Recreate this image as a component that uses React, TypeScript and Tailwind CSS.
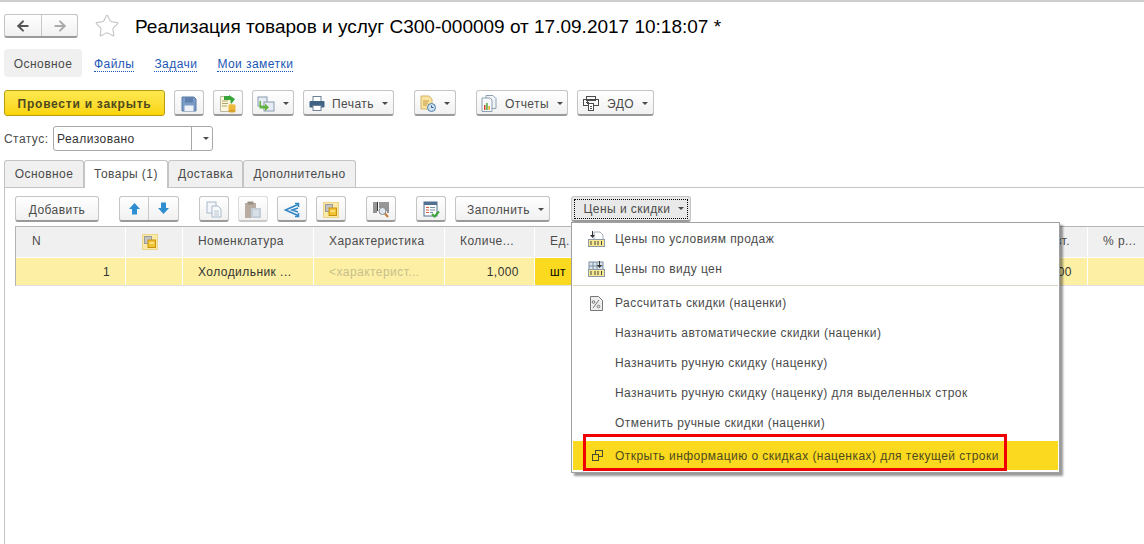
import React from "react"
import { ArrowLeft, ArrowRight, Star } from "lucide-react"

function Caret() {
  return <span className="ml-2 inline-block w-0 h-0 border-x-[3px] border-x-transparent border-t-[3px] border-t-[#4a4a4a]" />
}

function Btn({ w, children, className = "" }: { w: string; children?: React.ReactNode; className?: string }) {
  return (
    <div
      className={`h-[26px] ${w} pt-[2px] flex items-center justify-center shrink-0 rounded-[3px] border border-[#c4c4c4] border-b-[#9a9a9a] border-b-2 bg-linear-to-b from-white to-[#f1f1f1] text-[#4b4b4b] ${className}`}
    >
      {children}
    </div>
  )
}

// --- иконки ---
function SaveIcon() {
  return (
    <svg width="16" height="16" viewBox="0 0 16 16">
      <path d="M1 1h12l2 2v12H1z" fill="#7c9cc6" stroke="#5a7aa6" />
      <rect x="4" y="1.500" width="8" height="5" fill="#5f80ad" />
      <rect x="3.500" y="9.500" width="9" height="5.500" fill="#eef1f5" />
    </svg>
  )
}
function PostIcon() {
  return (
    <svg width="18" height="18" viewBox="0 0 18 18">
      <path d="M1.500 1.500h8l3 3v12h-11z" fill="#fbf6dc" stroke="#b9b9a0" />
      <path d="M3 6h6M3 8.500h6M3 11h5" stroke="#b2a36a" />
      <path d="M5 1h5V0l6 4-3 4h-1.500V5H5z" fill="#37a537" />
      <ellipse cx="13" cy="10.500" rx="3.500" ry="1.500" fill="#f0c24a" />
      <rect x="9.500" y="10.500" width="7" height="5.500" fill="#ecb93c" />
      <ellipse cx="13" cy="16" rx="3.500" ry="1.500" fill="#d9a22d" />
    </svg>
  )
}
function LinkedIcon() {
  return (
    <svg width="18" height="16" viewBox="0 0 18 16">
      <rect x="1" y="1" width="9" height="9" fill="#e6ecf3" stroke="#8a9bb0" />
      <rect x="7" y="6" width="10" height="9" fill="#e6ecf3" stroke="#8a9bb0" />
      <path d="M4 5v5h4V7.500l4 4-4 3.500v-2.500H2.500V5z" fill="#5fb53a" />
    </svg>
  )
}
function PrintIcon() {
  return (
    <svg width="16" height="15" viewBox="0 0 16 15">
      <rect x="4" y="0.500" width="8" height="5" fill="#fff" stroke="#6f8297" />
      <rect x="0.500" y="5" width="15" height="6.500" rx="1" fill="#3f6285" />
      <rect x="4" y="9.500" width="8" height="5" fill="#fff" stroke="#6f8297" />
    </svg>
  )
}
function DocClockIcon() {
  return (
    <svg width="16" height="17" viewBox="0 0 16 17">
      <path d="M1 1h8l3 3v10H1z" fill="#f9e3a0" stroke="#d3b468" />
      <path d="M3 6h6M3 8h5M3 10h4" stroke="#c69a45" />
      <circle cx="11.500" cy="12.500" r="4" fill="#cfe2f3" stroke="#4e7ea8" />
      <path d="M11.500 10.500v2h2" stroke="#2f5d86" fill="none" />
    </svg>
  )
}
function ReportIcon() {
  return (
    <svg width="16" height="17" viewBox="0 0 16 17">
      <path d="M5 .5h7l3 3v10H5z" fill="#f2f5f8" stroke="#8c9fb3" />
      <path d="M1 3h8l2 2v11.500H1z" fill="#f7f9fb" stroke="#8c9fb3" />
      <rect x="3" y="10" width="1.500" height="5" fill="#d8452f" />
      <rect x="5.200" y="8" width="1.500" height="7" fill="#4fa53a" />
      <rect x="7.400" y="11" width="1.500" height="4" fill="#e8a92b" />
    </svg>
  )
}
function EdoIcon() {
  return (
    <svg width="16" height="15" viewBox="0 0 16 15" fill="none" stroke="#4a4a4a">
      <rect x="3.500" y=".5" width="9" height="4" />
      <rect x=".5" y="3.500" width="15" height="6" />
      <rect x="5.500" y="7.500" width="5" height="7" fill="#fff" />
      <path d="M3 6.500h3M4.500 5v3M7 10.500h2M7 12.500h2" />
    </svg>
  )
}
function CopyIcon() {
  return (
    <svg width="16" height="17" viewBox="0 0 16 17">
      <rect x="1" y="1" width="9" height="11" fill="#f3f6fa" stroke="#a9bacb" />
      <path d="M6 5h6l3 3v8H6z" fill="#f7f9fb" stroke="#a9bacb" />
      <path d="M8 10h5M8 12h5M8 14h5" stroke="#b9c6d3" />
    </svg>
  )
}
function PasteIcon() {
  return (
    <svg width="18" height="18" viewBox="0 0 18 18">
      <rect x="1" y="2" width="11" height="15" fill="#b8aca2" />
      <rect x="3.500" y="0.500" width="6" height="3" fill="#9a8d82" />
      <rect x="7" y="7" width="10" height="10" fill="#c3ced9" />
      <path d="M9 10h6M9 12h6M9 14h6" stroke="#eef2f6" />
    </svg>
  )
}
function BranchIcon() {
  return (
    <svg width="16" height="16" viewBox="0 0 16 16" fill="none" stroke="#2f87c7" strokeWidth="1.500">
      <path d="M14 2.500L1.500 8 14 13.500M14 6L8 8l6 2" />
      <path d="M11 1.500h3.500v3.500M11 14.500h3.500V11" />
    </svg>
  )
}
function LockIcon() {
  return (
    <span className="w-4 h-4 flex items-center justify-center bg-[#fbe9a6] border border-[#ecd58b]">
      <svg width="12" height="12" viewBox="0 0 12 12">
        <rect x="0.500" y="0.500" width="7" height="7" fill="#c4c4c4" stroke="#9a9a9a" />
        <rect x="4" y="4" width="7.500" height="7.500" fill="#f4c430" stroke="#c69214" />
        <rect x="5.500" y="6.500" width="4.500" height="1.200" fill="#fff3c0" />
      </svg>
    </span>
  )
}
function BarcodeIcon() {
  return (
    <svg width="16" height="17" viewBox="0 0 16 17">
      <path d="M1 1v11M3 1v11M4.500 1v9M7 1v6M9 1v6M11 1v6M13 1v9M15 1v11" stroke="#333" />
      <circle cx="9.500" cy="10" r="3.500" fill="#dfe7ee" stroke="#8a8a8a" />
      <path d="M12 12.500l3 3.500" stroke="#c27a3a" strokeWidth="2" />
    </svg>
  )
}
function ListCheckIcon() {
  return (
    <svg width="17" height="17" viewBox="0 0 17 17">
      <rect x="1" y="1" width="13" height="14" fill="#fff" stroke="#52708f" />
      <rect x="1" y="1" width="13" height="3" fill="#52708f" />
      <path d="M3 6.500h3M3 9h3M3 11.500h3" stroke="#d85a3a" />
      <path d="M7 6.500h5M7 9h5M7 11.500h3" stroke="#7b8ea1" />
      <path d="M9 13l2.500 2.500L16 10.500" fill="none" stroke="#3da53a" strokeWidth="2" />
    </svg>
  )
}
function PriceIcon({ grid }: { grid?: boolean }) {
  return (
    <svg width="17" height="16" viewBox="0 0 17 16">
      {grid ? (
        <g>
          <rect x="1" y="1" width="14" height="8" fill="#dbe4ec" stroke="#7d90a3" />
          <path d="M5 1v8M9 1v8M1 5h14" stroke="#7d90a3" />
        </g>
      ) : (
        <path d="M6 1h6l3 3v5H6z" fill="#fff" stroke="#a3afba" />
      )}
      <path d="M4 0v4H2l2.500 3L7 4H5V0z" fill="#333" transform={grid ? "translate(7 0)" : ""} />
      <rect x="0.500" y="8.500" width="16" height="7" fill="#f7e88f" stroke="#8d9aa6" />
      <path d="M3 10v4M7 10v4M10 10v4M13.500 10v4" stroke="#444" />
    </svg>
  )
}
function PercentIcon() {
  return (
    <svg width="13" height="15" viewBox="0 0 13 15">
      <path d="M.5.500h8l4 4v10H.5z" fill="#eee" stroke="#777" />
      <path d="M3 12l6-8" stroke="#777" />
      <circle cx="3.500" cy="6" r="1.300" fill="none" stroke="#777" />
      <circle cx="8.500" cy="10.500" r="1.300" fill="none" stroke="#777" />
    </svg>
  )
}
function OpenIcon() {
  return (
    <svg width="11" height="11" viewBox="0 0 11 11" fill="none" stroke="#4a4a30">
      <rect x="3.500" y=".5" width="7" height="6" />
      <rect x=".5" y="4.500" width="6" height="6" fill="#fbd91e" />
    </svg>
  )
}

function HeadCell({ w, children, center }: { w: string; children?: React.ReactNode; center?: boolean }) {
  return (
    <div className={`${w} shrink-0 h-full bg-[#f0f0f0] flex items-center mr-px text-[#4b4b4b] ${center ? "justify-center pr-[8px]" : "pl-[15px]"}`}>
      {children}
    </div>
  )
}

function MenuItem({ icon, children }: { icon?: React.ReactNode; children: React.ReactNode }) {
  return (
    <div className="h-[30px] flex items-center shrink-0 text-[#4b4b4b]">
      <span className="w-[43px] flex justify-center pl-[6px] shrink-0">{icon}</span>
      {children}
    </div>
  )
}

export default function App() {
  return (
    <div className="relative w-[1144px] h-[544px] overflow-hidden bg-white text-[12px] tracking-[0.45px] font-['Liberation_Sans',Arial,sans-serif]">
      <div className="h-[2px] bg-[#cfcfcf]" />

      {/* Заголовок */}
      <div className="flex items-center h-[24px] mt-[12px] ml-[4px]">
        <div className="flex w-[74px] h-[24px] rounded-[3px] border border-[#c4c4c4] border-b-[#9a9a9a] border-b-2 bg-linear-to-b from-white to-[#f1f1f1]">
          <div className="w-[37px] flex items-center justify-center border-r border-[#c8c8c8]">
            <ArrowLeft size={16} strokeWidth={3} className="text-[#555]" />
          </div>
          <div className="flex-1 flex items-center justify-center">
            <ArrowRight size={16} strokeWidth={3} className="text-[#aaa]" />
          </div>
        </div>
        <Star size={26} strokeWidth={1} className="ml-[16px] text-[#c4c4c4]" />
        <h1 className="ml-[15px] pt-[2px] text-[19px] tracking-normal text-black whitespace-nowrap">Реализация товаров и услуг С300-000009 от 17.09.2017 10:18:07 *</h1>
      </div>

      {/* Ссылки на разделы */}
      <div className="flex items-center h-[28px] mt-[11px] ml-[4px] text-[#1c57b5]">
        <div className="w-[78px] h-full pt-[2px] flex items-center justify-center rounded-[4px] bg-[#f0f0f0] text-[#4b4b4b]">Основное</div>
        <span className="ml-[12px] mt-[2px] border-b border-dotted border-[#1c57b5] leading-[14px]">Файлы</span>
        <span className="ml-[20px] mt-[2px] border-b border-dotted border-[#1c57b5] leading-[14px]">Задачи</span>
        <span className="ml-[20px] mt-[2px] border-b border-dotted border-[#1c57b5] leading-[14px]">Мои заметки</span>
      </div>

      {/* Командная панель */}
      <div className="flex items-center h-[26px] mt-[13px] ml-[4px]">
        <div className="w-[161px] h-[26px] pt-[2px] flex items-center justify-center rounded-[3px] border border-[#b89c10] bg-linear-to-b from-[#fde94e] to-[#fbd400] font-bold text-[#4f4a1e] tracking-[0.75px]">
          Провести и закрыть
        </div>
        <Btn w="w-[30px]" className="ml-[9px]"><SaveIcon /></Btn>
        <Btn w="w-[30px]" className="ml-[9px]"><PostIcon /></Btn>
        <Btn w="w-[42px]" className="ml-[9px]"><LinkedIcon /><Caret /></Btn>
        <Btn w="w-[91px]" className="ml-[9px]"><PrintIcon /><span className="ml-[7px]">Печать</span><Caret /></Btn>
        <Btn w="w-[42px]" className="ml-[20px]"><DocClockIcon /><Caret /></Btn>
        <Btn w="w-[92px]" className="ml-[20px]"><ReportIcon /><span className="ml-[8px]">Отчеты</span><Caret /></Btn>
        <Btn w="w-[77px]" className="ml-[9px]"><EdoIcon /><span className="ml-[8px]">ЭДО</span><Caret /></Btn>
      </div>

      {/* Статус */}
      <div className="flex items-center h-[25px] mt-[10px] ml-[4px] text-[#4b4b4b]">
        <span className="w-[49px]">Статус:</span>
        <div className="flex w-[160px] h-[25px] rounded-[3px] border border-[#a8a8a8]">
          <span className="flex-1 flex items-center pl-[3px] text-[#333]">Реализовано</span>
          <span className="w-[21px] flex items-center justify-center border-l border-[#a8a8a8]"><Caret /></span>
        </div>
      </div>

      {/* Закладки */}
      <div className="flex items-end h-[28px] mt-[8px] ml-[4px] text-[#4b4b4b]">
        <div className="w-[80px] h-[27px] pb-px flex items-center justify-center bg-[#f0f0f0] border border-[#c4c4c4] border-b-0 rounded-t-[3px]">Основное</div>
        <div className="w-[84px] h-[28px] pb-[2px] -mb-px z-10 flex items-center justify-center bg-white border border-[#c4c4c4] border-b-0 rounded-t-[3px]">Товары (1)</div>
        <div className="w-[75px] h-[27px] pb-px flex items-center justify-center bg-[#f0f0f0] border border-[#c4c4c4] border-b-0 rounded-t-[3px]">Доставка</div>
        <div className="w-[113px] h-[27px] pb-px flex items-center justify-center bg-[#f0f0f0] border border-[#c4c4c4] border-b-0 rounded-t-[3px]">Дополнительно</div>
      </div>

      {/* Содержимое закладки */}
      <div className="ml-[4px] h-[357px] border-l border-t border-[#c4c4c4] pl-[10px] pt-[8px]">
        <div className="flex items-center h-[26px]">
          <Btn w="w-[84px]">Добавить</Btn>
          <div className="ml-[20px] flex w-[60px] h-[26px] rounded-[3px] border border-[#c4c4c4] border-b-[#9a9a9a] border-b-2 bg-linear-to-b from-white to-[#f1f1f1]">
            <div className="w-[29px] flex items-center justify-center border-r border-[#c8c8c8]">
              <svg width="13" height="13" viewBox="0 0 13 13"><path d="M6.500 1L12 7H9v5.500H4V7H1z" fill="#2f8ed0" /></svg>
            </div>
            <div className="flex-1 flex items-center justify-center">
              <svg width="13" height="13" viewBox="0 0 13 13"><path d="M6.500 12L12 6H9V.5H4V6H1z" fill="#2f8ed0" /></svg>
            </div>
          </div>
          <Btn w="w-[30px]" className="ml-[20px]"><CopyIcon /></Btn>
          <Btn w="w-[30px]" className="ml-[9px] border-[#dcdcdc] border-b-[#c8c8c8]"><PasteIcon /></Btn>
          <Btn w="w-[30px]" className="ml-[9px]"><BranchIcon /></Btn>
          <Btn w="w-[30px]" className="ml-[9px]"><LockIcon /></Btn>
          <Btn w="w-[30px]" className="ml-[20px]"><BarcodeIcon /></Btn>
          <Btn w="w-[30px]" className="ml-[20px]"><ListCheckIcon /></Btn>
          <Btn w="w-[95px]" className="ml-[9px] pl-[6px]">Заполнить<Caret /></Btn>
          <Btn w="w-[120px]" className="ml-[21px] !pt-0 border-[#8f8f8f] bg-none bg-[#e9e9e9]">
            <span className="flex items-center justify-center w-[114px] h-[20px] pl-[6px] border border-dotted border-black">Цены и скидки<Caret /></span>
          </Btn>
        </div>

        {/* Таблица */}
        <div className="mt-[4px] border-l border-t border-[#b4b4b4]">
          <div className="flex h-[30px] mb-px">
            <HeadCell w="w-[109px]"><span className="pl-[1px] pb-[2px]">N</span></HeadCell>
            <HeadCell w="w-[56px]" center><LockIcon /></HeadCell>
            <HeadCell w="w-[130px]"><span className="pb-[2px]">Номенклатура</span></HeadCell>
            <HeadCell w="w-[130px]"><span className="pb-[2px]">Характеристика</span></HeadCell>
            <HeadCell w="w-[89px]"><span className="pb-[2px]">Количе...</span></HeadCell>
            <div className="w-[552px] mr-px shrink-0 h-full bg-[#f0f0f0] flex items-center justify-between pl-[15px] pr-[17px] text-[#4b4b4b]">
              <span className="pb-[2px]">Ед.</span>
              <span className="pb-[2px]">вт.</span>
            </div>
            <HeadCell w="w-[56px]"><span className="pb-[2px]">% р...</span></HeadCell>
          </div>
          <div className="flex h-[27px] box-content border-b border-[#e0e0e0]">
            <div className="w-[109px] mr-px pt-px bg-[#fdf0a5] flex items-center justify-end pr-[15px] text-[#333]">1</div>
            <div className="w-[56px] mr-px bg-[#fdf0a5]" />
            <div className="w-[130px] mr-px pt-px bg-[#fdf0a5] flex items-center pl-[15px] text-[#333]">Холодильник ...</div>
            <div className="w-[130px] mr-px pt-px bg-[#fdf0a5] flex items-center pl-[15px] text-[#c8bf8a]">&lt;характерист...</div>
            <div className="w-[89px] mr-px pt-px bg-[#fdf0a5] flex items-center justify-end pr-[15px] text-[#333]">1,000</div>
            <div className="w-[58px] mr-px pt-px bg-[#fbd91e] flex items-center pl-[15px] text-black">шт</div>
            <div className="w-[493px] mr-px pt-px bg-[#fdf0a5] flex items-center justify-end pr-[15px] text-[#333]">00</div>
            <div className="w-[56px] bg-[#fdf0a5]" />
          </div>
        </div>
      </div>

      {/* Выпадающее меню */}
      <div className="absolute left-[571px] top-[222px] w-[489px] h-[251px] flex flex-col bg-white border border-[#a0a0a0] shadow-[3px_3px_2px_rgba(0,0,0,0.4)] pt-[1px]">
        <MenuItem icon={<PriceIcon />}>Цены по условиям продаж</MenuItem>
        <MenuItem icon={<PriceIcon grid />}>Цены по виду цен</MenuItem>
        <div className="h-px bg-[#d8d5c8] mx-[1px] mt-[1px] mb-[2px]" />
        <MenuItem icon={<PercentIcon />}>Рассчитать скидки (наценки)</MenuItem>
        <MenuItem>Назначить автоматические скидки (наценки)</MenuItem>
        <MenuItem>Назначить ручную скидку (наценку)</MenuItem>
        <MenuItem>Назначить ручную скидку (наценку) для выделенных строк</MenuItem>
        <MenuItem>Отменить ручные скидки (наценки)</MenuItem>
        <div className="h-[29px] mt-[3px] mx-[1px] flex items-center bg-[#fbd91e] text-[#4f4a1e]">
          <span className="w-[42px] flex justify-center pl-[6px] shrink-0"><OpenIcon /></span>
          Открыть информацию о скидках (наценках) для текущей строки
        </div>
      </div>

      {/* Красная рамка на скриншоте */}
      <div className="absolute left-[583px] top-[434px] w-[424px] h-[37px] border-[3px] border-[#f00000]" />
    </div>
  )
}
